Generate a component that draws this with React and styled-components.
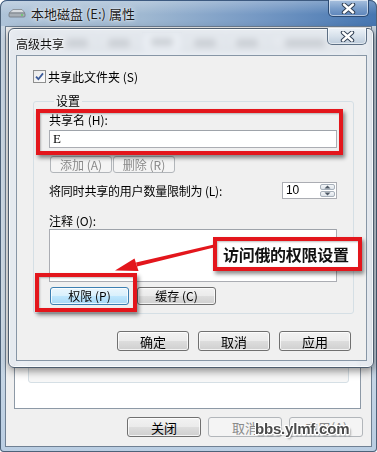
import React from 'react';
import styled, { createGlobalStyle } from 'styled-components';

const cjk = `"Noto Sans CJK SC", "Noto Sans", sans-serif`;

const GlobalStyle = createGlobalStyle`
  html, body { margin: 0; padding: 0; background: #fff; }
  body { font-family: ${cjk}; font-size: 12px; color: #000; }
  * { box-sizing: border-box; }
`;

const Stage = styled.div`
  position: relative;
  width: 377px;
  height: 452px;
  overflow: hidden;
`;

/* ---------- outer properties window ---------- */

const OuterWindow = styled.div`
  position: relative;
  width: 377px;
  height: 452px;
  display: flex;
  flex-direction: column;
  padding: 0 5px 5px;
  border-radius: 7px 7px 4px 4px;
  background: linear-gradient(180deg, #c9d6e3 0%, #cfdbe6 70%, #b9cde2 100%);
  box-shadow: inset 0 0 0 1px #4d6279;
`;

const TitleBar = styled.div`
  height: 26px;
  margin: 0 -5px;
  padding: 0 8px;
  display: flex;
  align-items: center;
  gap: 5px;
  border-radius: 7px 7px 0 0;
  background:
    linear-gradient(180deg, rgba(255, 255, 255, 0.28) 0%, rgba(255, 255, 255, 0) 55%),
    linear-gradient(90deg, #aec3d8 0%, #9fb8d1 38%, #7699c4 68%, #4676b1 100%);
  box-shadow: inset 0 1px 0 #3d5a80, inset 1px 0 0 #4d6279, inset -1px 0 0 #4d6279;
`;

const TitleText = styled.span`
  font-size: 13px;
  color: #1b1b1b;
  text-shadow: 0 0 6px rgba(255, 255, 255, 0.9), 0 0 2px rgba(255, 255, 255, 0.9);
`;

const CaptionClose = styled.div`
  position: absolute;
  top: ${p => p.$top}px;
  right: ${p => p.$right}px;
  width: ${p => p.$w}px;
  height: 17px;
  border: 1px solid ${p => (p.$light ? '#5d6f84' : '#2b4a73')};
  border-top: none;
  border-radius: 0 0 5px 5px;
  background: ${p =>
    p.$light
      ? 'linear-gradient(180deg, #eef3f8 0%, #d7e1eb 50%, #bccbdb 100%)'
      : 'linear-gradient(180deg, #a9c1df 0%, #7c9fcb 50%, #5b84ba 100%)'};
  box-shadow: inset 0 0 0 1px rgba(255, 255, 255, 0.55);
  display: flex;
  align-items: center;
  justify-content: center;
`;

const Client = styled.div`
  flex: 1;
  display: flex;
  flex-direction: column;
  border: 1px solid #6f8093;
  background: #f0f0f0;
  padding: 5px 8px 9px 8px;
`;

const TabRow = styled.div`
  height: 19px;
  display: flex;
  gap: 4px;
  padding-left: 2px;
`;

/* the tab strip sits behind the dialog's glass title, only blurred shapes show */
const Tab = styled.div`
  width: ${p => p.$w}px;
  height: ${p => (p.$active ? 19 : 17)}px;
  margin-top: ${p => (p.$active ? 0 : 2)}px;
  border: 1px solid #8d99a6;
  border-bottom: none;
  background: ${p => (p.$active ? '#fff' : 'linear-gradient(#f2f2f2, #dadada)')};
  display: flex;
  align-items: center;
  justify-content: center;
`;

const TabInk = styled.div`
  width: 60%;
  height: 8px;
  border-radius: 2px;
  background: #5c5f63;
  opacity: 0.75;
`;

const TabPanel = styled.div`
  flex: 1;
  margin-right: 2px;
  display: flex;
  flex-direction: column;
  padding: 14px 11px 25px 13px;
  border: 1px solid #8d99a6;
  background: #fff;
`;

const PanelGroup = styled.div`
  flex: 1;
  border: 1px solid #d5dfe5;
  border-radius: 3px;
  background: #f7f7f7;
`;

const ButtonRow = styled.div`
  display: flex;
  justify-content: flex-end;
  gap: ${p => p.$gap}px;
  margin-top: ${p => p.$mt || 0}px;
  padding-right: ${p => p.$pr || 0}px;
`;

const Button = styled.div`
  width: ${p => p.$w}px;
  height: ${p => p.$h || 20}px;
  display: flex;
  align-items: center;
  justify-content: center;
  font-size: ${p => p.$fs || 12}px;
  line-height: 1;
  color: ${p => (p.$disabled ? '#8a8a8a' : '#000')};
  border: 1px solid ${p => (p.$primary ? '#3c7fb1' : p.$disabled ? '#b2b6ba' : '#707070')};
  border-radius: 3px;
  background: ${p =>
    p.$primary
      ? 'linear-gradient(180deg, #eaf6fd 0%, #d9f0fc 48%, #bee6fd 52%, #a7d9f5 100%)'
      : p.$disabled
      ? '#f4f4f4'
      : 'linear-gradient(180deg, #f2f2f2 0%, #ebebeb 48%, #dddddd 52%, #cfcfcf 100%)'};
  box-shadow: inset 0 0 0 1px rgba(255, 255, 255, ${p => (p.$disabled ? 0 : 0.75)});
`;

/* ---------- advanced sharing dialog ---------- */

const Dialog = styled.div`
  position: absolute;
  left: 8px;
  top: 28px;
  width: 366px;
  display: flex;
  flex-direction: column;
  padding: 0 6px 6px 7px;
  border: 1px solid #4e5d6e;
  border-radius: 6px;
  background: rgba(228, 234, 240, 0.74);
  backdrop-filter: blur(3px);
  box-shadow: inset 0 0 0 1px rgba(255, 255, 255, 0.7), 1px 3px 8px rgba(0, 0, 0, 0.45);
`;

const DialogTitle = styled.div`
  height: 26px;
  display: flex;
  align-items: center;
  padding-top: 2px;
  font-size: 12px;
  color: #111;
  text-shadow: 0 0 5px #fff, 0 0 2px #fff;
`;

const DialogBody = styled.div`
  display: flex;
  flex-direction: column;
  border: 1px solid #8796a6;
  background: #f0f0f0;
  padding: 14px 12px 9px 16px;
`;

const CheckRow = styled.div`
  height: 13px;
  display: flex;
  align-items: center;
  gap: 2px;
  font-size: 12px;
`;

const CheckBox = styled.div`
  width: 13px;
  height: 13px;
  border: 1px solid #8e8f8f;
  background: linear-gradient(135deg, #e9e9e9 0%, #fbfbfb 100%);
  display: flex;
  align-items: center;
  justify-content: center;
`;

const Group = styled.fieldset`
  margin: 11px 0 0;
  padding: 5px 16px 8px 15px;
  border: 1px solid #d5dfe5;
  border-radius: 3px;
  display: flex;
  flex-direction: column;
  min-width: 0;
`;

const Legend = styled.legend`
  margin-left: 5px;
  padding: 0 2px;
  font-size: 12px;
  line-height: 14px;
`;

const Label = styled.div`
  height: 14px;
  line-height: 14px;
  font-size: 12px;
  margin-top: ${p => p.$mt || 0}px;
`;

const TextBox = styled.div`
  height: ${p => p.$h}px;
  margin-top: ${p => p.$mt || 0}px;
  border: 1px solid #abadb3;
  border-top-color: #9ea3aa;
  background: #fff;
  padding: 1px 3px;
  font-family: "Liberation Serif", serif;
  font-size: 13px;
  line-height: 14px;
`;

const SmallButtons = styled.div`
  display: flex;
  gap: ${p => p.$gap}px;
  margin-top: ${p => p.$mt}px;
  padding-left: 1px;
`;

const LimitRow = styled.div`
  height: 17px;
  margin-top: 9px;
  display: flex;
  align-items: center;
  justify-content: space-between;
  font-size: 12px;
  letter-spacing: -0.2px;
`;

const Spinner = styled.div`
  width: 55px;
  height: 17px;
  display: flex;
  border: 1px solid #abadb3;
  background: #fff;
`;

const SpinValue = styled.span`
  flex: 1;
  padding-left: 3px;
  font-family: "Liberation Sans", sans-serif;
  font-size: 12px;
  line-height: 15px;
`;

const SpinButtons = styled.div`
  width: 17px;
  display: flex;
  flex-direction: column;
  padding: 1px;
  gap: 1px;
`;

const SpinHalf = styled.div`
  flex: 1;
  border: 1px solid #a7b0ba;
  border-radius: 2px;
  background: linear-gradient(180deg, #f5f7f9 0%, #dde3ea 100%);
  display: flex;
  align-items: center;
  justify-content: center;
`;

/* ---------- annotations laid over the screenshot ---------- */

const RedFrame = styled.div`
  position: absolute;
  left: ${p => p.$x}px;
  top: ${p => p.$y}px;
  width: ${p => p.$w}px;
  height: ${p => p.$h}px;
  border: 4px solid #e3161c;
  box-shadow: 2px 3px 4px rgba(0, 0, 0, 0.45), inset 1px 1px 2px rgba(0, 0, 0, 0.25);
  pointer-events: none;
`;

const Callout = styled(RedFrame)`
  background: #fff;
  display: flex;
  align-items: center;
  padding-left: 6px;
  font-size: 16px;
  font-weight: 700;
  color: #111;
  letter-spacing: -0.3px;
`;

const ArrowLayer = styled.svg`
  position: absolute;
  left: 0;
  top: 0;
  pointer-events: none;
`;

const Watermark = styled.div`
  position: absolute;
  left: 255px;
  top: 420px;
  font-family: "Liberation Sans", Arial, sans-serif;
  font-weight: 700;
  font-size: 15px;
  letter-spacing: -0.2px;
  color: #4b4b4b;
  text-shadow: 1px 0 0 #fff, -1px 0 0 #fff, 0 1px 0 #fff, 0 -1px 0 #fff,
    1px 1px 0 #fff, -1px -1px 0 #fff, 1px -1px 0 #fff, -1px 1px 0 #fff,
    2px 2px 2px rgba(0, 0, 0, 0.35);
`;

const CloseGlyph = ({ size = 11 }) => (
  <svg width={size + 4} height={size} viewBox="0 0 15 11">
    <path d="M3 1.5 L12 9.5 M12 1.5 L3 9.5" stroke="#2f3e52" strokeWidth="4.4" strokeLinecap="round" />
    <path d="M3 1.5 L12 9.5 M12 1.5 L3 9.5" stroke="#fff" strokeWidth="2.4" strokeLinecap="round" />
  </svg>
);

const DriveIcon = () => (
  <svg width="18" height="12" viewBox="0 0 18 12">
    <path d="M1 6 L5 2.5 H14 L17 6 Z" fill="#d9dde1" stroke="#7d858d" strokeWidth="0.8" />
    <rect x="1" y="6" width="16" height="4" rx="1" fill="#a8afb6" stroke="#6f767d" strokeWidth="0.8" />
    <circle cx="14" cy="8" r="0.9" fill="#5fd05f" />
  </svg>
);

const Check = () => (
  <svg width="9" height="9" viewBox="0 0 9 9">
    <path d="M1 4.6 L3.4 7.2 L8 1.4" fill="none" stroke="#3a5a99" strokeWidth="1.8" />
  </svg>
);

const Tri = ({ up }) => (
  <svg width="7" height="4" viewBox="0 0 7 4">
    <path d={up ? 'M0.5 3.6 L3.5 0.4 L6.5 3.6 Z' : 'M0.5 0.4 L3.5 3.6 L6.5 0.4 Z'} fill="#4d5865" />
  </svg>
);

const tabs = [
  { w: 38 }, { w: 38 }, { w: 38 }, { w: 40, active: true }, { w: 38 }, { w: 38 }, { w: 70 },
];

export default function App() {
  return (
    <Stage>
      <GlobalStyle />
      <OuterWindow>
        <TitleBar>
          <DriveIcon />
          <TitleText>本地磁盘 (E:) 属性</TitleText>
        </TitleBar>
        <CaptionClose $top={0} $right={8} $w={41}>
          <CloseGlyph />
        </CaptionClose>
        <Client>
          <TabRow>
            {tabs.map((t, i) => (
              <Tab key={i} $w={t.w} $active={t.active}>
                <TabInk />
              </Tab>
            ))}
          </TabRow>
          <TabPanel>
            <PanelGroup />
          </TabPanel>
          <ButtonRow $gap={7} $mt={8}>
            <Button $w={74} $fs={13}>关闭</Button>
            <Button $w={74} $fs={13} $disabled>取消</Button>
            <Button $w={74} $fs={13} $disabled>应用(A)</Button>
          </ButtonRow>
        </Client>
      </OuterWindow>

      <Dialog>
        <DialogTitle>高级共享</DialogTitle>
        <CaptionClose $top={-1} $right={6} $w={40} $light>
          <CloseGlyph />
        </CaptionClose>
        <DialogBody>
          <CheckRow>
            <CheckBox>
              <Check />
            </CheckBox>
            共享此文件夹 (S)
          </CheckRow>
          <Group>
            <Legend>设置</Legend>
            <Label>共享名 (H):</Label>
            <TextBox $h={18} $mt={3}>E</TextBox>
            <SmallButtons $gap={1} $mt={8}>
              <Button $w={62} $h={17} $disabled>添加 (A)</Button>
              <Button $w={62} $h={17} $disabled>删除 (R)</Button>
            </SmallButtons>
            <LimitRow>
              <span>将同时共享的用户数量限制为 (L):</span>
              <Spinner>
                <SpinValue>10</SpinValue>
                <SpinButtons>
                  <SpinHalf><Tri up /></SpinHalf>
                  <SpinHalf><Tri /></SpinHalf>
                </SpinButtons>
              </Spinner>
            </LimitRow>
            <Label $mt={15}>注释 (O):</Label>
            <TextBox $h={53} $mt={1} />
            <SmallButtons $gap={8} $mt={5}>
              <Button $w={79} $h={18} $primary>权限 (P)</Button>
              <Button $w={79} $h={18}>缓存 (C)</Button>
            </SmallButtons>
          </Group>
          <ButtonRow $gap={9} $mt={17} $pr={3}>
            <Button $w={72} $fs={13}>确定</Button>
            <Button $w={72} $fs={13}>取消</Button>
            <Button $w={72} $fs={13}>应用</Button>
          </ButtonRow>
        </DialogBody>
      </Dialog>

      <RedFrame $x={36} $y={109} $w={307} $h={46} />
      <RedFrame $x={35} $y={273} $w={102} $h={39} />
      <ArrowLayer width="377" height="452" viewBox="0 0 377 452">
        <polygon points="214,244.5 214,247.5 137,266.5 136,262.5" fill="#e3161c" />
        <polygon points="115,270.5 134.5,258.5 138.5,271" fill="#e3161c" />
      </ArrowLayer>
      <Callout $x={213} $y={237} $w={149} $h={34}>访问俄的权限设置</Callout>
      <Watermark>bbs.ylmf.com</Watermark>
    </Stage>
  );
}
